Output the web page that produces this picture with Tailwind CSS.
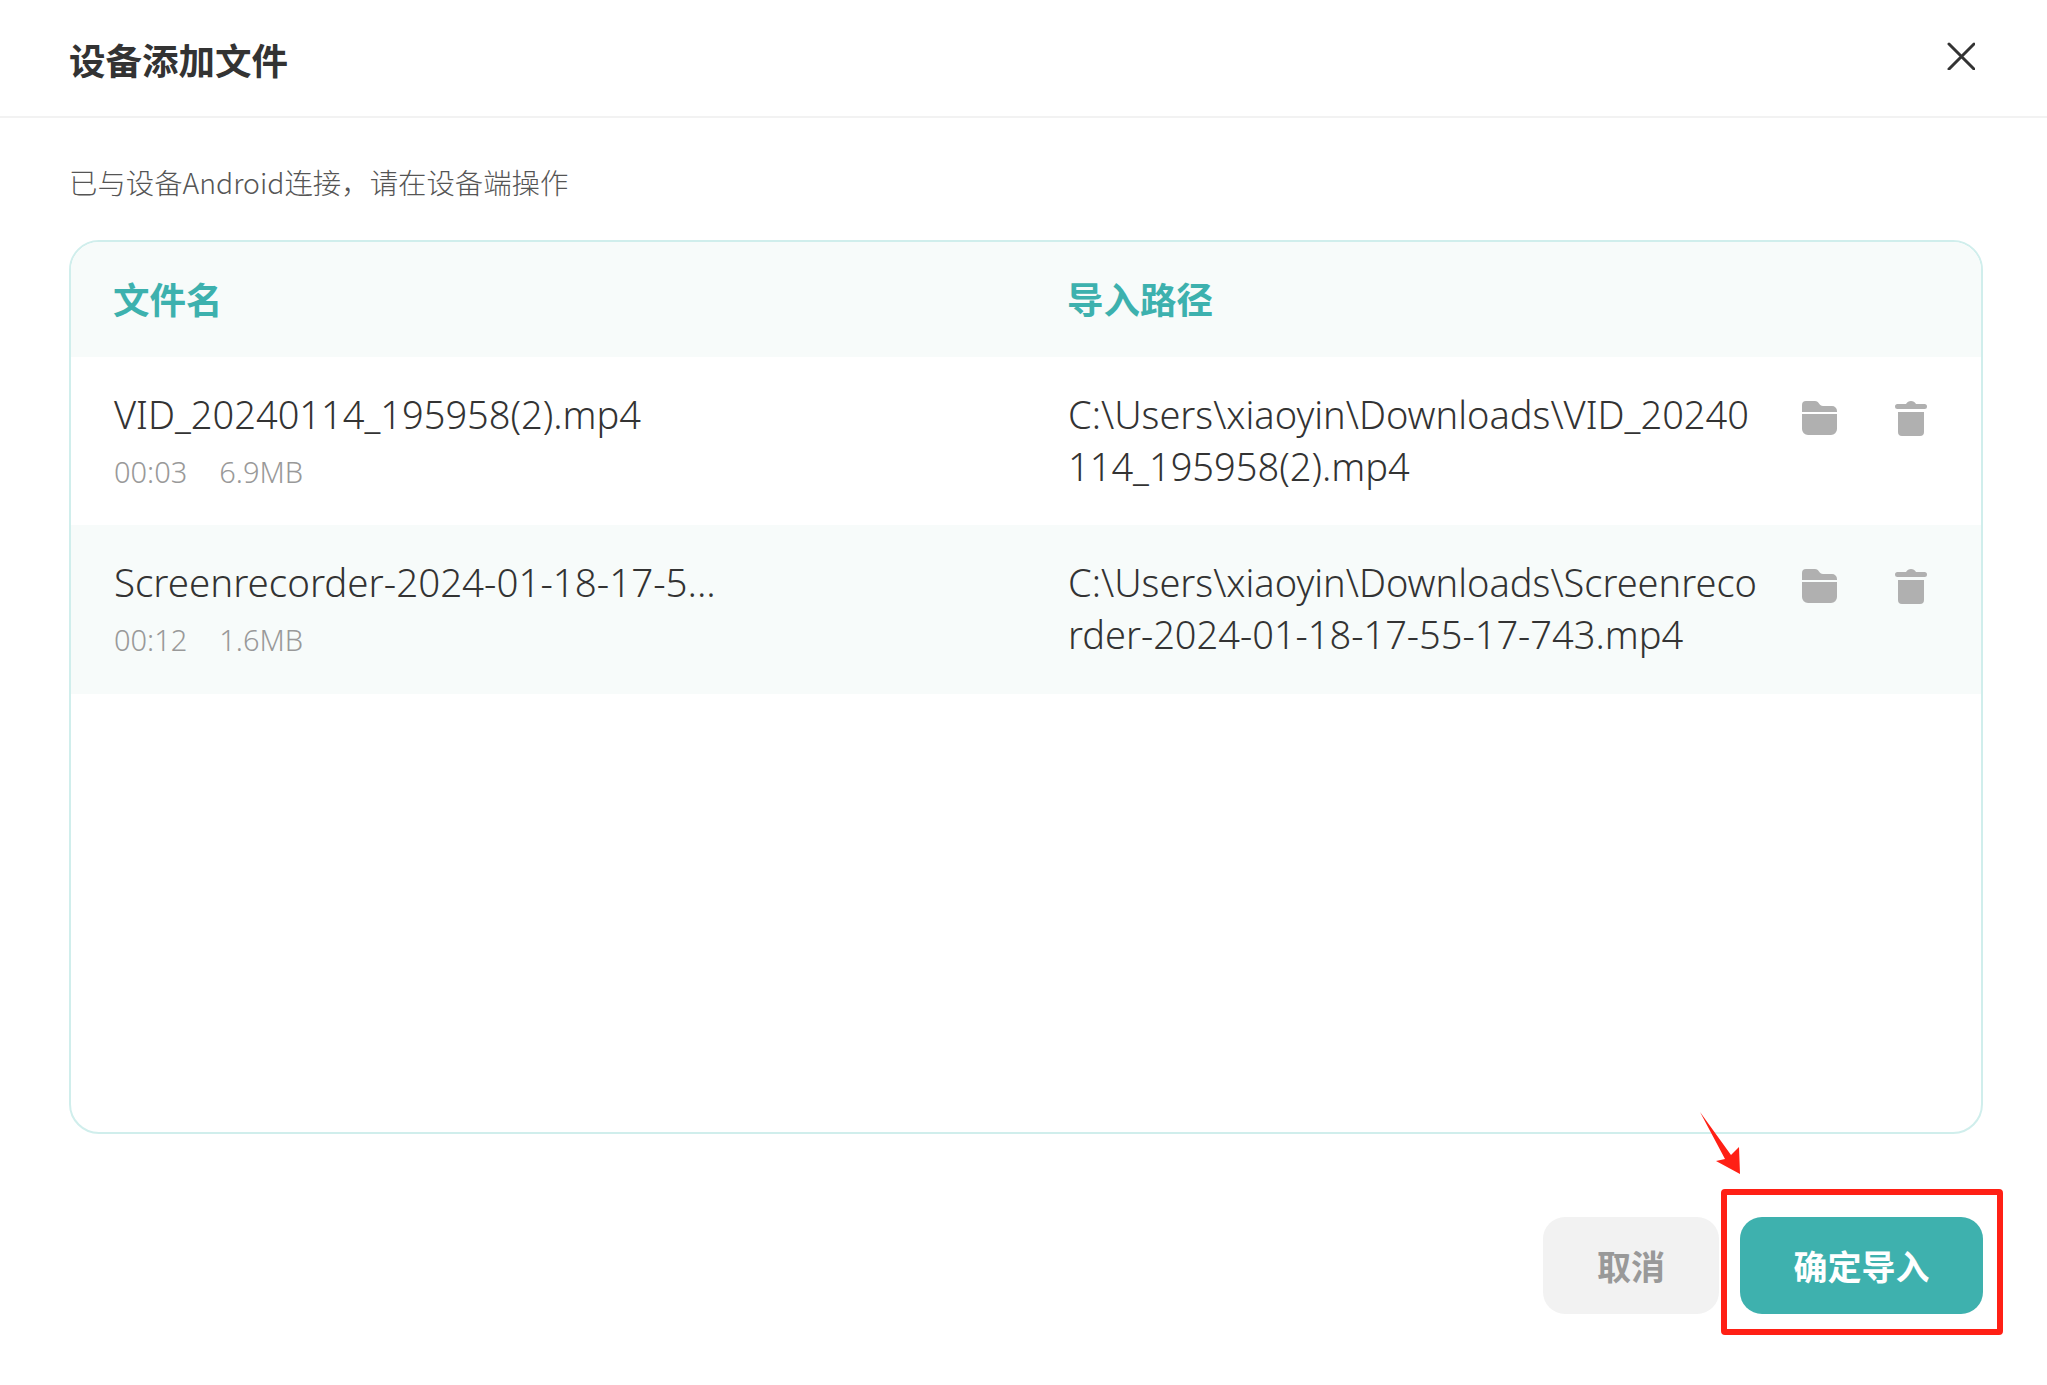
<!DOCTYPE html>
<html lang="zh-CN">
<head>
  <meta charset="UTF-8" />
  <title>设备添加文件</title>
  <script src="https://cdn.jsdelivr.net/npm/@tailwindcss/browser@4"></script>
</head>
<body class="relative bg-white h-[1385px] overflow-hidden font-['Noto_Sans_CJK_SC','Noto_Sans',sans-serif] text-[#333]">

  <!-- Title bar -->
  <div class="h-[118px] border-b-2 border-[#f2f2f2] pl-[69px] pr-[72px] flex items-center justify-between">
    <h1 class="text-[36.500px] leading-[50px] font-bold mt-[3px]">设备添加文件</h1>
    <button class="-mt-[5px]">
      <svg width="28" height="28" viewBox="0 0 28 28" fill="none" stroke="#333" stroke-width="3" stroke-linecap="round"><path d="M2 2l25 25M27 2L2 27"/></svg>
    </button>
  </div>

  <div class="pl-[69px] pr-[64px]">
    <p class="mt-[44px] h-[40px] text-[28.400px] leading-[40px] font-light text-[#555]">已与设备Android连接，请在设备端操作</p>

    <!-- File table -->
    <div class="mt-[38px] h-[894px] border-2 border-[#d0eeec] rounded-[30px] overflow-hidden">
      <div class="h-[115px] bg-[#f7fbfa] flex items-center pl-[42px] text-[36.500px] font-bold text-[#3db1ae]">
        <div class="w-[954px]">文件名</div>
        <div>导入路径</div>
      </div>

      <div class="h-[168px] flex pl-[43px] pt-[31px] font-['Noto_Sans','Noto_Sans_CJK_SC',sans-serif]">
        <div class="w-[954px]">
          <div class="text-[38px] leading-[52px] font-light">VID_20240114_195958(2).mp4</div>
          <div class="mt-[12px] flex gap-[32px] text-[29px] leading-[40px] font-light text-[#999]"><span>00:03</span><span>6.9MB</span></div>
        </div>
        <div class="w-[733px] text-[38px] leading-[52px] font-light">C:\Users\xiaoyin\Downloads\VID_20240<br>114_195958(2).mp4</div>
        <svg class="mt-[12px] w-[36px] h-[36px]" viewBox="0 0 36 36" fill="#b0b0b0"><path d="M1 12V5a4 4 0 0 1 4-4h9c2 0 3 1 4 2.500C19 5 20 6 22 6h9a5 5 0 0 1 5 5v1zM1 14h35v15a6 6 0 0 1-6 6H7a6 6 0 0 1-6-6z"/></svg>
        <svg class="mt-[11px] ml-[58px] w-[32px] h-[38px]" viewBox="0 0 32 38" fill="#b0b0b0"><path d="M2.500 5H11c1-2 3-3 5-3s4 1 5 3h8.500a2.500 2.500 0 0 1 0 5h-27a2.500 2.500 0 0 1 0-5zM3 13h26v20a4 4 0 0 1-4 4H7a4 4 0 0 1-4-4z"/></svg>
      </div>

      <div class="h-[169px] bg-[#f7fbfa] flex pl-[43px] pt-[31px] font-['Noto_Sans','Noto_Sans_CJK_SC',sans-serif]">
        <div class="w-[954px]">
          <div class="text-[38.500px] leading-[52px] font-light">Screenrecorder-2024-01-18-17-5...</div>
          <div class="mt-[12px] flex gap-[32px] text-[29px] leading-[40px] font-light text-[#999]"><span>00:12</span><span>1.6MB</span></div>
        </div>
        <div class="w-[733px] text-[38px] leading-[52px] font-light">C:\Users\xiaoyin\Downloads\Screenreco<br>rder-2024-01-18-17-55-17-743.mp4</div>
        <svg class="mt-[12px] w-[36px] h-[36px]" viewBox="0 0 36 36" fill="#b0b0b0"><path d="M1 12V5a4 4 0 0 1 4-4h9c2 0 3 1 4 2.500C19 5 20 6 22 6h9a5 5 0 0 1 5 5v1zM1 14h35v15a6 6 0 0 1-6 6H7a6 6 0 0 1-6-6z"/></svg>
        <svg class="mt-[11px] ml-[58px] w-[32px] h-[38px]" viewBox="0 0 32 38" fill="#b0b0b0"><path d="M2.500 5H11c1-2 3-3 5-3s4 1 5 3h8.500a2.500 2.500 0 0 1 0 5h-27a2.500 2.500 0 0 1 0-5zM3 13h26v20a4 4 0 0 1-4 4H7a4 4 0 0 1-4-4z"/></svg>
      </div>
    </div>

    <!-- Actions -->
    <div class="mt-[83px] flex justify-end gap-[21px]">
      <button class="w-[176px] h-[97px] rounded-[22px] bg-[#f2f2f2] text-[34px] font-bold text-[#999]">取消</button>
      <button class="w-[243px] h-[97px] rounded-[22px] bg-[#3eb1ae] text-[34px] font-bold text-white">确定导入</button>
    </div>
  </div>

  <!-- Red annotation over the confirm button -->
  <div class="absolute left-[1721px] top-[1189px] w-[282px] h-[146px] border-[6px] border-[#ff2015] rounded-[4px]"></div>
  <svg class="absolute left-[1695px] top-[1108px]" width="50" height="70" viewBox="1695 1108 50 70" fill="#ff2015"><path d="M1700 1112L1731 1155L1739 1147L1740 1174L1716 1161L1725 1159Z"/></svg>

</body>
</html>
